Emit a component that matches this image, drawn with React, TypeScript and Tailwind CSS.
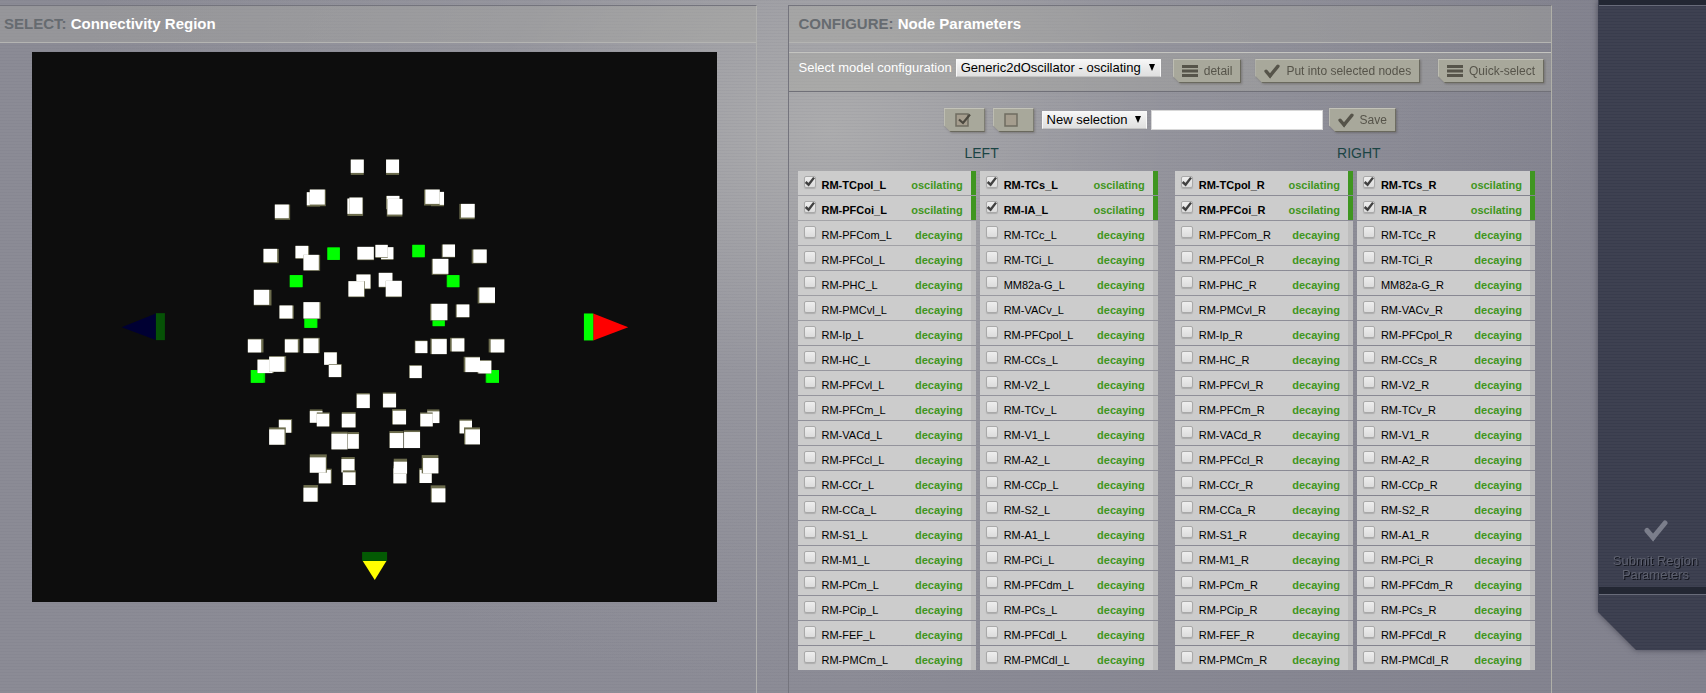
import React, { useState } from "react";

type Cube = [x: number, y: number, w: number, h: number, dx: number, dy: number, selected?: boolean];

// Node positions in scene units; dx/dy give the visible side of each cube.
const FRONT_CUBES: Cube[] = [
  [362, 28, 39, 40, 0, 6], [468, 28, 39, 40, 0, 6],
  [230, 126, 40, 39, 0, 4], [239, 118, 45, 45, 3, 5],
  [134, 163, 42, 41, 4, 5],
  [352, 145, 42, 46, 3, 6], [358, 142, 39, 49, 2, 6],
  [470, 137, 38, 40, -2, 0], [472, 146, 45, 47, -2, 6],
  [603, 125, 39, 39, 0, 4], [586, 118, 43, 43, -4, 5],
  [693, 161, 41, 41, -5, 5],
  [100, 296, 41, 40, 5, 3],
  [196, 287, 38, 37, 3, 2], [220, 314, 46, 46, 4, 2],
  [292, 292, 37, 37, 0, 0, true], [547, 284, 37, 37, 0, 0, true],
  [382, 290, 49, 38, 1, 2], [453, 291, 37, 36, 0, 2], [436, 284, 37, 37, 0, 2],
  [638, 283, 37, 37, -3, 2], [608, 326, 47, 45, -3, 3],
  [730, 298, 40, 40, -5, 2],
  [179, 375, 37, 36, 2, 0, true], [652, 375, 36, 36, -2, 0, true],
  [379, 373, 42, 42, 1, 2], [355, 393, 47, 46, 2, 2],
  [446, 368, 41, 42, 0, 2], [467, 392, 48, 47, 0, 2],
  [71, 419, 46, 45, 7, 2], [748, 412, 47, 46, -5, 2],
  [148, 466, 39, 39, 4, 1],
  [223, 498, 37, 35, 2, 0, true], [220, 456, 48, 49, 4, 1],
  [609, 496, 35, 32, -2, 0, true], [604, 461, 48, 49, -4, 1],
  [680, 463, 38, 38, -3, 1],
  [53, 568, 40, 39, 7, -2], [164, 568, 39, 39, 5, -2], [220, 565, 45, 44, 4, -2],
  [556, 573, 36, 36, -2, -2], [605, 567, 45, 45, -4, -2],
  [665, 565, 38, 39, -5, -2], [782, 568, 41, 39, -6, -2],
  [282, 607, 38, 37, 1, -1], [296, 644, 37, 37, 2, -2],
  [62, 660, 38, 38, 5, 0, true], [82, 629, 45, 40, 4, -2], [117, 620, 46, 45, 5, -2],
  [539, 647, 36, 37, -2, -2],
  [770, 660, 37, 38, -3, 0, true], [745, 632, 39, 38, -3, -2], [706, 622, 44, 44, -5, -2],
  [380, 733, 39, 41, -1, -4], [459, 731, 39, 41, -1, -4],
];

const BACK_CUBES: Cube[] = [
  [239, 333, 38, 35, 0, -5], [260, 341, 37, 38, 2, -4],
  [335, 341, 41, 41, 1, -5], [488, 332, 40, 41, -2, -5],
  [592, 334, 36, 35, -1, -6], [571, 341, 37, 38, -1, -4],
  [146, 360, 37, 38, 3, -3], [117, 388, 46, 46, 4, -6],
  [689, 362, 37, 38, -1, -4], [706, 388, 44, 45, -4, -6],
  [353, 402, 33, 44, 1, -6], [304, 401, 48, 47, 1, -6],
  [479, 399, 41, 45, -1, -6], [522, 396, 48, 48, -1, -5],
  [266, 510, 36, 40, 3, -4], [239, 472, 48, 46, 3, -9],
  [334, 477, 39, 40, 1, -6], [338, 517, 38, 38, 1, -6],
  [490, 505, 39, 45, 0, -8], [491, 485, 40, 36, 0, -9],
  [569, 510, 36, 39, -2, -5], [579, 474, 46, 46, -4, -9],
  [220, 563, 42, 42, 2, -8], [605, 565, 41, 42, -3, -9],
];

function Cubes({ items }: { items: Cube[] }) {
  return (
    <>
      {items.map(([x, y, w, h, dx, dy, selected], i) => (
        <g key={i}>
          <rect x={x + Math.min(dx, 0)} y={y + Math.min(dy, 0)} width={w + Math.abs(dx)} height={h + Math.abs(dy)} fill={selected ? "#00d800" : "#6b6b4c"} />
          <rect x={x} y={y} width={w} height={h} fill={selected ? "#00ff00" : "#ffffff"} />
        </g>
      ))}
    </>
  );
}

function BrainScene() {
  return (
    <svg viewBox="0 0 2055 1650" className="block w-full bg-[#0d0d0d]" role="img" aria-label="Connectivity nodes">
      <g transform="translate(595 295)"><Cubes items={FRONT_CUBES} /></g>
      <g transform="translate(595 745)"><Cubes items={BACK_CUBES} /></g>
      <path d="M269 826 372 785v80z" fill="#000033" />
      <rect x="372" y="784" width="27" height="81" fill="#065206" />
      <path d="M1790 826 1685 785v81z" fill="#ff0000" />
      <rect x="1657" y="785" width="28" height="81" fill="#00ff00" />
      <rect x="991" y="1501" width="75" height="27" fill="#035a03" />
      <path d="M993 1528h71l-35 57z" fill="#ffff00" />
    </svg>
  );
}

function CheckIcon({ className }: { className: string }) {
  return (
    <svg viewBox="0 0 24 22" className={className} fill="none" stroke="currentColor" strokeWidth="5" aria-hidden="true">
      <path d="M3 10.500 9 17.500 21 3" strokeLinecap="round" />
      <path d="M6 15.500 9.200 21.500 13 15.500z" fill="currentColor" stroke="none" />
    </svg>
  );
}

function BarsIcon() {
  return (
    <svg viewBox="0 0 16 12" className="h-3 w-4" fill="currentColor" aria-hidden="true">
      <path d="M0 0h16v3H0zM0 4.500h16v3H0zM0 9h16v3H0z" />
    </svg>
  );
}

function BoxIcon({ checked }: { checked?: boolean }) {
  return (
    <svg viewBox="0 0 16 16" className="h-4 w-4" fill="none" stroke="#6f6c61" aria-hidden="true">
      <rect x="1" y="2" width="12" height="12" fill="#a59d8e" strokeWidth="1.500" />
      {checked && <path d="M4 7.500 8 11 15 2.500" stroke="#4b483f" strokeWidth="2.200" />}
    </svg>
  );
}

function ActionButton({ icon, children, label }: { icon: React.ReactNode; children?: React.ReactNode; label?: string }) {
  return (
    <span className="inline-flex shrink-0 drop-shadow-[1px_1px_1px_rgba(60,55,45,0.35)]">
      <button
        type="button"
        aria-label={label}
        className="flex h-6 items-center gap-1.5 whitespace-nowrap border border-t-[#c2c2b8] border-r-[#6a695e] border-b-[#6a695e] border-l-[#bdbdb2] bg-[#a8a89b] px-2 text-xs text-[#56544a] [clip-path:polygon(0_0,100%_0,100%_100%,7px_100%,0_calc(100%-7px))]"
      >
        {icon}
        {children}
      </button>
    </span>
  );
}

function Dropdown({ label, options, className }: { label: string; options: string[]; className: string }) {
  return (
    <span className={`relative inline-flex shrink-0 ${className}`}>
      <select
        aria-label={label}
        className="h-[18px] w-full appearance-none border border-[#f8f8f8] border-b-[#c4c4c4] bg-linear-to-b from-[#f6f6f6] to-[#dfdfdf] pl-1 text-[13px] leading-4 text-black"
      >
        {options.map((o) => (
          <option key={o}>{o}</option>
        ))}
      </select>
      <svg viewBox="0 0 6 7" className="pointer-events-none absolute top-[5px] right-1.5 h-[7px] w-1.5" aria-hidden="true">
        <path d="M0 0h6L3 7z" />
      </svg>
    </span>
  );
}

const FIRST = ["TCpol", "PFCoi", "PFCom", "PFCol", "PHC", "PMCvl", "Ip", "HC", "PFCvl", "PFCm", "VACd", "PFCcl", "CCr", "CCa", "S1", "M1", "PCm", "PCip", "FEF", "PMCm"];
const SECOND = ["TCs", "IA", "TCc", "TCi", "MM82a-G", "VACv", "PFCpol", "CCs", "V2", "TCv", "V1", "A2", "CCp", "S2", "A1", "PCi", "PFCdm", "PCs", "PFCdl", "PMCdl"];

function NodeRow({ name, active }: { name: string; active: boolean }) {
  const [checked, setChecked] = useState(active);
  return (
    <li>
      <label className={`flex h-6 items-start border-r-[5px] bg-[#cccccc] pr-2 pl-1.5 text-[11px] leading-7 ${active ? "border-[#3f9620]" : "border-[#bdbdbd]"}`}>
        <span className="relative mt-[5px] mr-1.5 flex">
          <input
            type="checkbox"
            checked={checked}
            onChange={() => setChecked(!checked)}
            className="h-3 w-3 appearance-none rounded-xs border border-[#a9a9a9] bg-linear-to-b from-[#eeeeee] to-[#dcdcdc] shadow-[0_1px_1px_rgba(0,0,0,0.15)]"
          />
          {checked && (
            <svg viewBox="0 0 11 11" className="pointer-events-none absolute inset-0 h-3 w-3" fill="none" stroke="#404040" strokeWidth="2.200" aria-hidden="true">
              <path d="M1.500 5.500 4.200 8 9.200 1.500" />
            </svg>
          )}
        </span>
        <span className={active ? "font-bold text-black" : "text-black"}>{name}</span>
        <span className="ml-auto font-bold text-[#3f9620]">{active ? "oscilating" : "decaying"}</span>
      </label>
    </li>
  );
}

function Hemisphere({ title, side }: { title: string; side: "L" | "R" }) {
  return (
    <section className="flex-1">
      <h2 className="mb-2.5 pl-2 text-center text-sm leading-4 text-[#1b4444]">{title}</h2>
      <div className="grid grid-cols-2 gap-1">
        {[FIRST, SECOND].map((names, col) => (
          <ul key={col} className="flex flex-col gap-px">
            {names.map((n, i) => (
              <NodeRow key={n} name={`${n.startsWith("MM") ? "" : "RM-"}${n}_${side}`} active={i < 2} />
            ))}
          </ul>
        ))}
      </div>
    </section>
  );
}

function PanelHeader({ prefix, title, className }: { prefix: string; title: string; className: string }) {
  return (
    <h1 className={`h-[37px] border-b border-[#b4b4b2] bg-[#acaca2]/35 text-[15px] leading-9 font-bold text-white ${className}`}>
      <span className="text-[#666b70]">{prefix}</span> {title}
    </h1>
  );
}

export default function App() {
  return (
    <div className="flex min-h-screen items-stretch overflow-hidden bg-[#868691] bg-[repeating-linear-gradient(to_bottom,rgba(70,70,90,0.05)_0px,rgba(70,70,90,0.05)_1px,transparent_1px,transparent_3px),radial-gradient(ellipse_750px_560px_at_830px_130px,rgba(178,178,178,0.85),rgba(160,160,166,0.5)_45%,transparent),linear-gradient(to_right,#8b8b95,#8c8c96_50%,#82828e)] font-['Liberation_Sans',Arial,sans-serif]">
      <section className="mt-[5px] flex-[757] border-t border-r border-t-[#74747d] border-r-[#b0b0ae]">
        <PanelHeader prefix="SELECT:" title="Connectivity Region" className="pl-1" />
        <div className="pt-[9px] pr-[39px] pl-8">
          <BrainScene />
        </div>
      </section>

      <section className="mt-[5px] ml-[31px] flex-[764] border-t border-r border-l border-t-[#74747d] border-r-[#b0b0a8] border-l-[#74747d]">
        <PanelHeader prefix="CONFIGURE:" title="Node Parameters" className="pl-2.5" />
        <div className="mt-[9px] flex h-10 items-start border-t border-b border-t-[#c4c4c0] border-b-[#707078] bg-[#acaca2]/35 pt-1.5 pr-[7px] pl-2.5">
          <span className="mr-1 whitespace-nowrap text-[13px] leading-[18px] text-white">Select model configuration</span>
          <Dropdown label="Model configuration" options={["Generic2dOscillator - oscilating"]} className="w-[205px]" />
          <span className="ml-3 flex grow gap-3.5">
            <ActionButton icon={<BarsIcon />}>detail</ActionButton>
            <ActionButton icon={<CheckIcon className="h-[15px] w-4" />}>Put into selected nodes</ActionButton>
            <span className="ml-auto flex">
              <ActionButton icon={<BarsIcon />}>Quick-select</ActionButton>
            </span>
          </span>
        </div>

        <form className="mt-4 flex items-center justify-center gap-2" onSubmit={(e) => e.preventDefault()}>
          <ActionButton label="Select all nodes" icon={<span className="flex w-[23px] pl-0.5"><BoxIcon checked /></span>} />
          <ActionButton label="Clear all nodes" icon={<span className="flex w-[23px] pl-0.5"><BoxIcon /></span>} />
          <Dropdown label="Saved selection" options={["New selection"]} className="w-[105px]" />
          <span className="-ml-1 flex items-center gap-1.5">
            <input aria-label="Selection name" className="h-5 w-[172px] border border-[#d8d8d8] bg-white px-1 text-[13px] text-black" />
            <ActionButton icon={<CheckIcon className="h-[15px] w-4" />}>Save</ActionButton>
          </span>
        </form>

        <div className="mt-[13px] flex gap-[17px] pr-4 pb-6 pl-[9px]">
          <Hemisphere title="LEFT" side="L" />
          <Hemisphere title="RIGHT" side="R" />
        </div>
      </section>

      <aside className="ml-[46px] w-[108px] shrink-0 self-start drop-shadow-[0_0_3px_rgba(50,50,65,0.7)]">
        <div className="bg-[#3e4151] bg-[repeating-linear-gradient(to_bottom,rgba(20,25,45,0.12)_0px,rgba(20,25,45,0.12)_1px,transparent_1px,transparent_3px)] pl-px [clip-path:polygon(0_0,100%_0,100%_100%,38px_100%,0_calc(100%-38px))]">
          <div className="h-1.5 border-b border-[#686b79] bg-[#232733]" />
          <div className="pt-[514px] pb-[5px]">
            <button type="button" className="flex w-full flex-col items-center pl-1.5 text-[13px] leading-[14px] text-[#5d606e] [text-shadow:1px_1px_0_#11131b]">
              <CheckIcon className="mb-3 h-[22px] w-6 text-[#7b7e8b]" />
              <span>Submit Region<br />Parameters</span>
            </button>
          </div>
          <div className="h-2 border-b border-[#686b79] bg-[#232733]" />
          <div className="h-[55px]" />
        </div>
      </aside>
    </div>
  );
}
